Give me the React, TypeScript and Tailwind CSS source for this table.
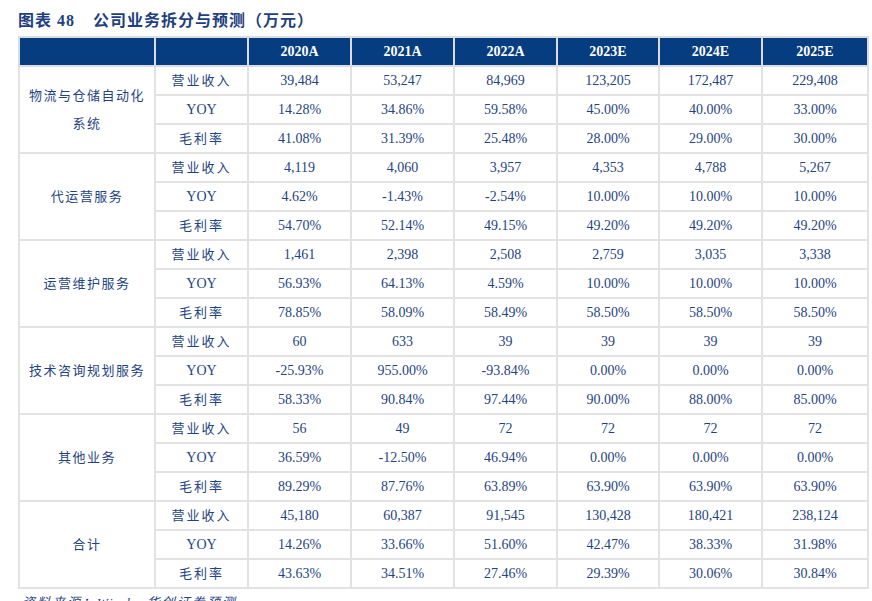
import React from "react";

const years = ["2020A", "2021A", "2022A", "2023E", "2024E", "2025E"];

type Segment = { name: string; lines?: string[]; rows: string[][] };

const segments: Segment[] = [
  {
    name: "物流与仓储自动化系统",
    lines: ["物流与仓储自动化", "系统"],
    rows: [
      ["39,484", "53,247", "84,969", "123,205", "172,487", "229,408"],
      ["14.28%", "34.86%", "59.58%", "45.00%", "40.00%", "33.00%"],
      ["41.08%", "31.39%", "25.48%", "28.00%", "29.00%", "30.00%"],
    ],
  },
  {
    name: "代运营服务",
    rows: [
      ["4,119", "4,060", "3,957", "4,353", "4,788", "5,267"],
      ["4.62%", "-1.43%", "-2.54%", "10.00%", "10.00%", "10.00%"],
      ["54.70%", "52.14%", "49.15%", "49.20%", "49.20%", "49.20%"],
    ],
  },
  {
    name: "运营维护服务",
    rows: [
      ["1,461", "2,398", "2,508", "2,759", "3,035", "3,338"],
      ["56.93%", "64.13%", "4.59%", "10.00%", "10.00%", "10.00%"],
      ["78.85%", "58.09%", "58.49%", "58.50%", "58.50%", "58.50%"],
    ],
  },
  {
    name: "技术咨询规划服务",
    rows: [
      ["60", "633", "39", "39", "39", "39"],
      ["-25.93%", "955.00%", "-93.84%", "0.00%", "0.00%", "0.00%"],
      ["58.33%", "90.84%", "97.44%", "90.00%", "88.00%", "85.00%"],
    ],
  },
  {
    name: "其他业务",
    rows: [
      ["56", "49", "72", "72", "72", "72"],
      ["36.59%", "-12.50%", "46.94%", "0.00%", "0.00%", "0.00%"],
      ["89.29%", "87.76%", "63.89%", "63.90%", "63.90%", "63.90%"],
    ],
  },
  {
    name: "合计",
    rows: [
      ["45,180", "60,387", "91,545", "130,428", "180,421", "238,124"],
      ["14.26%", "33.66%", "51.60%", "42.47%", "38.33%", "31.98%"],
      ["43.63%", "34.51%", "27.46%", "29.39%", "30.06%", "30.84%"],
    ],
  },
];

const metrics = ["营业收入", "YOY", "毛利率"];

const serif = "font-['Liberation_Serif','Noto_Sans_CJK_SC',serif]";

export default function App() {
  return (
    <div className={`w-[872px] h-[601px] overflow-hidden bg-white pl-[18px] text-[#1f4482] ${serif}`}>
      {/* title */}
      <div className="h-[36px] pt-[11px] text-[16px] leading-[20px] font-bold text-[#1f3f7f] tracking-[1px] whitespace-nowrap">
        图表 48<span className="ml-[18px]">公司业务拆分与预测（万元）</span>
      </div>

      <table className="border-collapse table-fixed w-[849px] text-[14px]">
        <colgroup>
          <col className="w-[136px]" />
          <col className="w-[93px]" />
          <col className="w-[103px]" />
          <col className="w-[103px]" />
          <col className="w-[103px]" />
          <col className="w-[102px]" />
          <col className="w-[103px]" />
          <col className="w-[106px]" />
        </colgroup>
        <thead>
          <tr className="h-[29px] bg-[#063c80] text-white font-bold">
            <th className="border-2 border-[#d9dde3]"></th>
            <th className="border-2 border-[#d9dde3]"></th>
            {years.map((y) => (
              <th key={y} className="border-2 border-[#d9dde3] text-[14px] font-bold">
                {y}
              </th>
            ))}
          </tr>
        </thead>
        <tbody>
          {segments.map((seg) =>
            seg.rows.map((vals, i) => (
              <tr key={seg.name + i} className="h-[29px]">
                {i === 0 && (
                  <td
                    rowSpan={3}
                    className="border-2 border-[#e2e2e2] text-center text-[13px] leading-[28px] tracking-[1.5px] px-0 whitespace-nowrap"
                  >
                    {seg.lines
                      ? seg.lines.map((l) => <div key={l}>{l}</div>)
                      : seg.name}
                  </td>
                )}
                <td className="border-2 border-[#e2e2e2] text-center text-[13px] tracking-[2px]">
                  {metrics[i] === "YOY" ? (
                    <span className="text-[14px] tracking-normal">YOY</span>
                  ) : (
                    metrics[i]
                  )}
                </td>
                {vals.map((v, j) => (
                  <td key={j} className="border-2 border-[#e2e2e2] text-center">
                    {v}
                  </td>
                ))}
              </tr>
            ))
          )}
        </tbody>
      </table>

      <div className="mt-[4px] pl-[4px] text-[13px] italic tracking-[2px] text-[#1f3f7f]">
        资料来源：Wind，华创证券预测
      </div>
    </div>
  );
}
